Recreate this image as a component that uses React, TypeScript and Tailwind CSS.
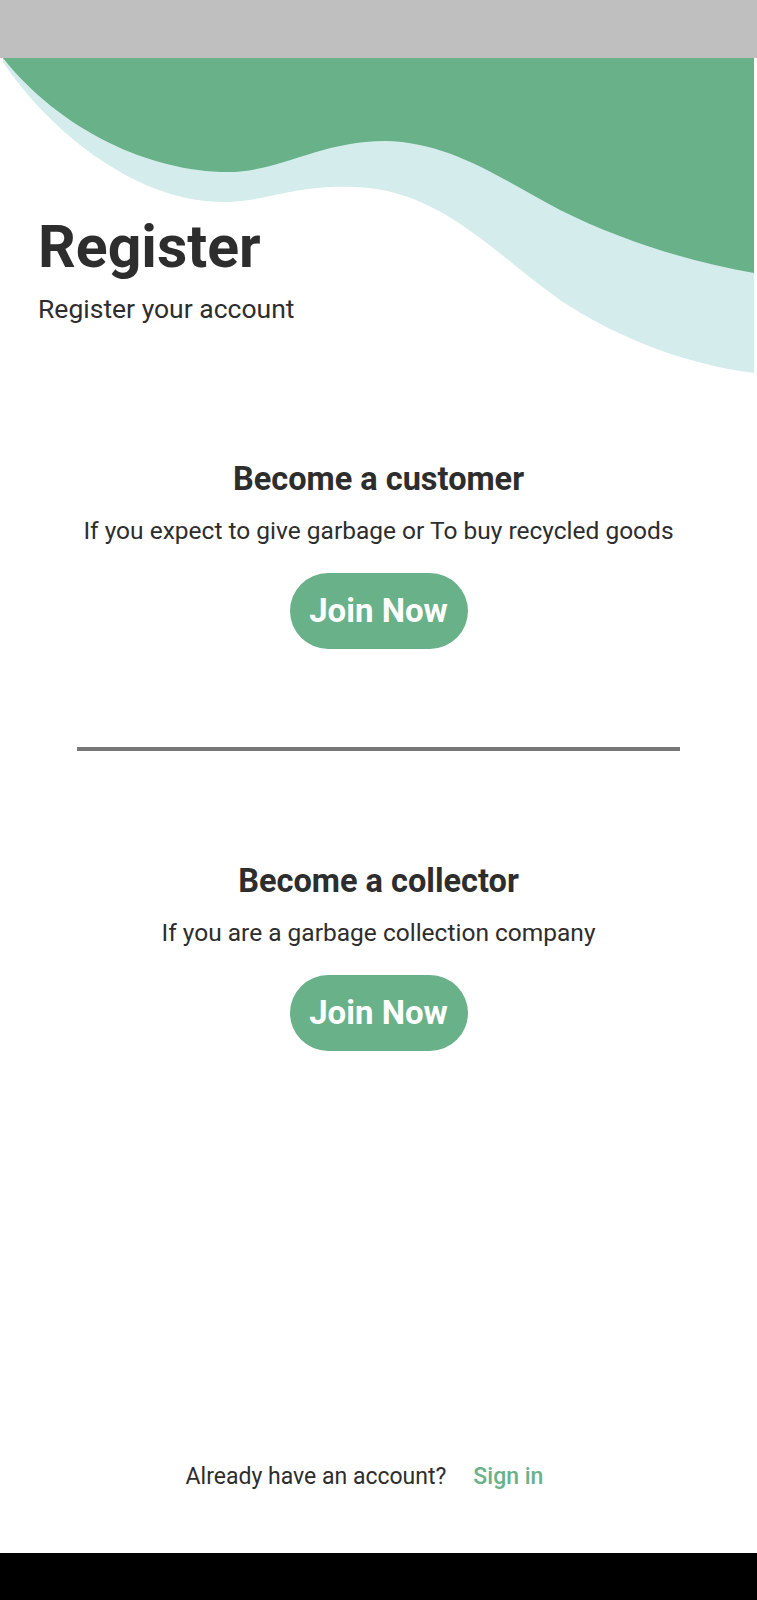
export default function App() {
  return (
    <div
      className="w-full h-[1600px] flex flex-col bg-white text-[#2d2d2d]"
      style={{ fontFamily: "Roboto, 'Noto Sans', sans-serif" }}
    >
      <div className="h-[58px] bg-[#bfbfbf]" />

      <main className="relative flex-1 flex flex-col">
        <Waves />

        <header className="relative px-[38px] pt-[159px]">
          <h1 className="text-[59px] font-bold leading-none">Register</h1>
          <p className="mt-[20px] text-[26.5px] leading-none">
            Register your account
          </p>
        </header>

        <Section
          className="mt-[140px]"
          title="Become a customer"
          text="If you expect to give garbage or To buy recycled goods"
        />

        <div className="mt-[98px] mx-auto w-[603px] h-[4px] bg-[#777777]" />

        <Section
          className="mt-[114px]"
          title="Become a collector"
          text="If you are a garbage collection company"
        />

        <footer className="mt-auto mb-[65px] pr-[28px] flex justify-center items-center gap-[27px] text-[23px] leading-none">
          <span>Already have an account?</span>
          <a href="#" className="text-[#68b189] font-medium">
            Sign in
          </a>
        </footer>
      </main>

      <div className="h-[47px] bg-black" />
    </div>
  );
}

function Section({
  title,
  text,
  className,
}: {
  title: string;
  text: string;
  className?: string;
}) {
  return (
    <section className={"flex flex-col items-center text-center " + className}>
      <h2 className="text-[32.5px] font-bold leading-none">{title}</h2>
      <p className="mt-[24px] text-[24.5px] leading-none">{text}</p>
      <button className="mt-[29px] w-[178px] h-[76px] rounded-full bg-[#68b189] text-white text-[33px] font-bold">
        Join Now
      </button>
    </section>
  );
}

function Waves() {
  return (
    <svg
      className="absolute top-0 left-0 w-full h-[400px]"
      viewBox="0 58 757 400"
      preserveAspectRatio="none"
    >
      <path
        d="M3 58 H754 V373 C690 365 620 340 560 300 C490 250 440 190 355 187 C290 185 270 202 220 202 C130 200 45 125 3 62 Z"
        fill="#d5ecec"
      />
      <path
        d="M3 58 H754 V273 C690 262 620 240 560 210 C500 178 450 142 385 141 C320 141 280 172 228 172 C150 172 60 130 3 58 Z"
        fill="#68b189"
      />
    </svg>
  );
}
